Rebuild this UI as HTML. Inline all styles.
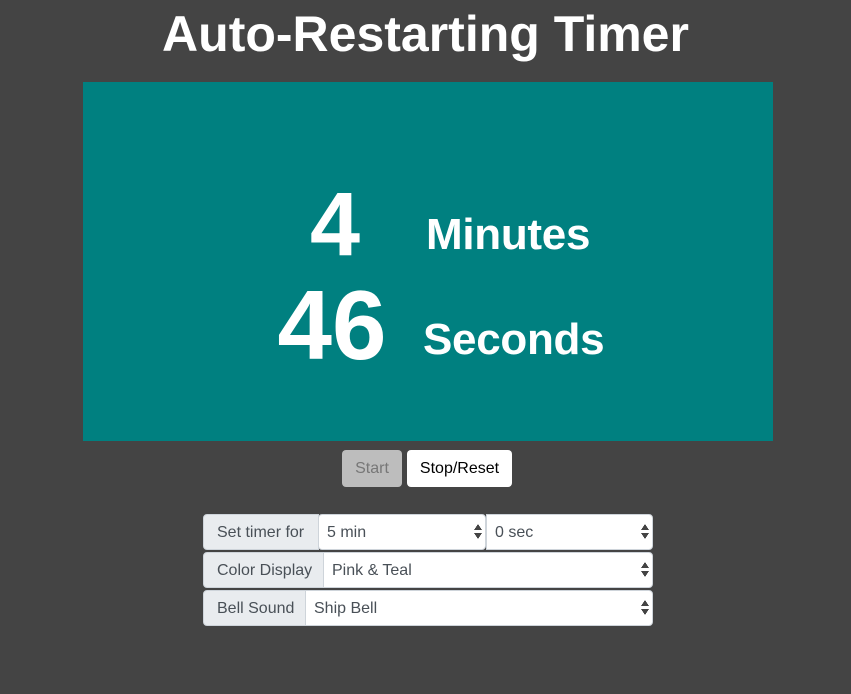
<!DOCTYPE html>
<html><head><style>
body{margin:0;width:851px;height:694px;background:#444;font-family:"Liberation Sans",sans-serif;position:relative;overflow:hidden}
.a{position:absolute;white-space:nowrap}
.t{color:#fff;font-weight:bold}
.lab{position:absolute;background:#e9ecef;color:#495057;font-size:16px;line-height:35px;height:36px;padding-left:13px;box-sizing:border-box;border-radius:4px 0 0 4px;border:1px solid #ced4da}
.sel{position:absolute;background:#fff;color:#495057;font-size:16px;line-height:36px;height:36px;padding-left:8px;box-sizing:border-box;border:1px solid #ced4da;border-radius:0 4px 4px 0}
.sel:after{content:"";position:absolute;right:3px;top:9px;width:8px;height:16px;background:
linear-gradient(to bottom right,transparent 50%,#444 50%) 0 0/4px 6px no-repeat,
linear-gradient(to bottom left,transparent 50%,#444 50%) 4px 0/4px 6px no-repeat,
linear-gradient(to top right,transparent 50%,#444 50%) 0 9px/4px 6px no-repeat,
linear-gradient(to top left,transparent 50%,#444 50%) 4px 9px/4px 6px no-repeat}
</style></head><body>
<div class="a t" style="left:0;width:851px;text-align:center;top:2px;font-size:50px;line-height:64px;letter-spacing:0">Auto-Restarting Timer</div>
<div class="a" style="left:83px;top:82px;width:690px;height:359px;background:#008080"></div>
<div class="a t" style="left:280px;width:110px;text-align:center;top:175px;font-size:90px;line-height:100px">4</div>
<div class="a t" style="left:262px;width:140px;text-align:center;top:272px;font-size:98px;line-height:106px">46</div>
<div class="a t" style="left:426px;top:207px;font-size:44px;line-height:56px;letter-spacing:-0.3px">Minutes</div>
<div class="a t" style="left:423px;top:312px;font-size:44px;line-height:56px;letter-spacing:-0.3px">Seconds</div>
<div class="a" style="left:342px;top:450px;width:60px;height:37px;background:#bdbdbd;border-radius:4px;color:#777;font-size:16px;line-height:38px;text-align:center">Start</div>
<div class="a" style="left:407px;top:450px;width:105px;height:37px;background:#fff;border-radius:4px;color:#000;font-size:16px;line-height:38px;text-align:center">Stop/Reset</div>
<div class="lab" style="left:203px;top:514px;width:116px">Set timer for</div>
<div class="sel" style="left:318px;top:514px;width:168px;border-radius:4px">5 min</div>
<div class="sel" style="left:486px;top:514px;width:167px">0 sec</div>
<div class="lab" style="left:203px;top:552px;width:121px">Color Display</div>
<div class="sel" style="left:323px;top:552px;width:330px">Pink &amp; Teal</div>
<div class="lab" style="left:203px;top:590px;width:103px">Bell Sound</div>
<div class="sel" style="left:305px;top:590px;width:348px">Ship Bell</div>
</body></html>
